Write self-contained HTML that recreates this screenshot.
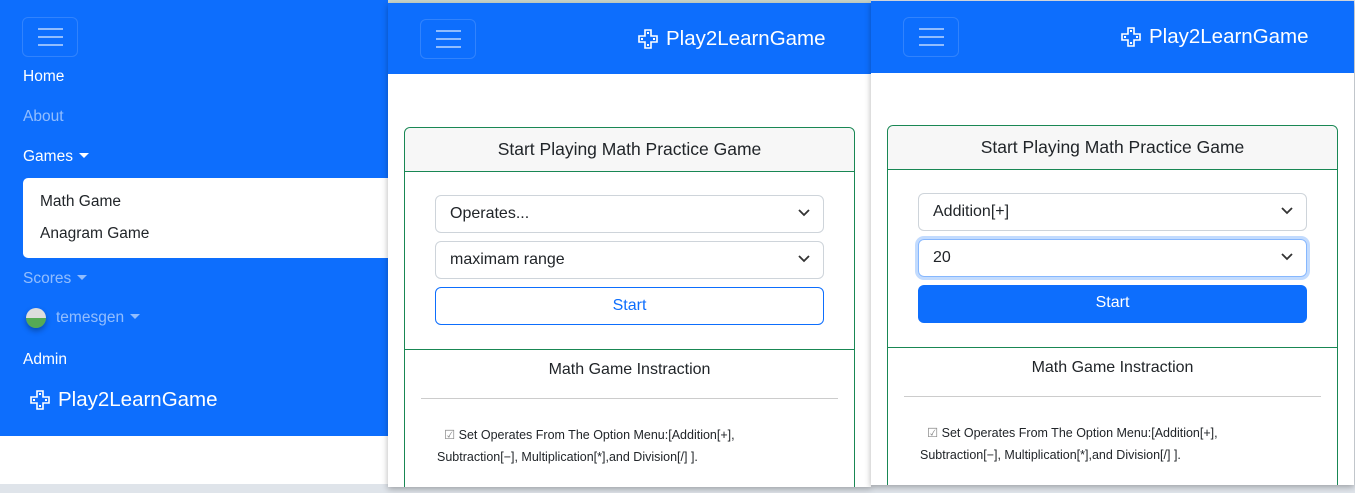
<!DOCTYPE html>
<html><head><meta charset="utf-8">
<style>
*{box-sizing:border-box;margin:0;padding:0}
body{width:1355px;height:493px;background:#dfe4ea;position:relative;overflow:hidden;font-family:"Liberation Sans",sans-serif}
.abs{position:absolute}
.blue{background:#0d6efd}
.tog{position:absolute;width:56px;height:40px;border:1px solid rgba(255,255,255,.15);border-radius:6px}
.tog i{position:absolute;left:15px;width:25px;height:2px;background:rgba(255,255,255,.55)}
.nav{position:absolute;left:23px;font-size:15.5px;color:#fff}
.dim{color:rgba(255,255,255,.55)}
.caret{display:inline-block;width:0;height:0;border-left:5px solid transparent;border-right:5px solid transparent;border-top:5px solid currentColor;vertical-align:3px;margin-left:6px}
.brand{position:absolute;color:#fff;font-size:20.5px;display:flex;align-items:center;gap:8px}
.panel{position:absolute;background:#fff;box-shadow:0 2px 6px rgba(0,0,0,.3);overflow:hidden}
.card{position:absolute;left:16px;width:451px;height:380px;border:1px solid #198754;border-radius:6px}
.ch{height:44px;background:#f7f7f7;border-bottom:1px solid #198754;text-align:center;font-size:17.5px;color:#212529;line-height:42px;border-radius:6px 6px 0 0}
.sel{position:absolute;left:30px;width:389px;height:38px;border:1px solid #ced4da;border-radius:6px;font-size:16px;color:#212529;padding-left:14px;line-height:36px}
.sel svg{position:absolute;right:13px;top:13px}
.btn{position:absolute;left:30px;width:389px;height:38px;border-radius:6px;font-size:16px;text-align:center;line-height:36px}
.sep{position:absolute;left:0;right:0;border-top:1px solid #198754}
.it{position:absolute;left:0;right:0;text-align:center;font-size:16px;color:#212529}
.hr{position:absolute;left:16px;right:16px;border-top:1px solid #ccc}
.txt{position:absolute;left:32px;width:420px;font-size:12.5px;color:#212529;line-height:22px}
</style></head><body>

<!-- panel 1 -->
<div class="abs" style="left:0;top:0;width:388px;height:484px;background:#fff"></div>
<div class="abs blue" style="left:0;top:0;width:388px;height:436px"></div>
<div class="tog" style="left:22px;top:17px"><i style="top:10px"></i><i style="top:18px"></i><i style="top:26px"></i></div>
<div class="nav" style="top:68px">Home</div>
<div class="nav dim" style="top:108px">About</div>
<div class="nav" style="top:148px">Games<span class="caret"></span></div>
<div class="abs" style="left:23px;top:178px;width:370px;height:80px;background:#fff;border-radius:5px"></div>
<div class="abs" style="left:40px;top:193px;font-size:15.5px;color:#212529">Math Game</div>
<div class="abs" style="left:40px;top:225px;font-size:15.5px;color:#212529">Anagram Game</div>
<div class="nav dim" style="top:270px">Scores<span class="caret"></span></div>
<div class="abs" style="left:26px;top:308px;width:20px;height:20px;border-radius:50%;background:linear-gradient(#ddd 50%,#5a5 50%);box-shadow:0 3px 6px rgba(0,0,0,.3)"></div>
<div class="nav dim" style="left:56px;top:309px">temesgen<span class="caret"></span></div>
<div class="nav" style="top:351px">Admin</div>
<div class="brand" style="left:30px;top:388px">
<svg width="20" height="20" viewBox="0 0 20 20" fill="none" stroke="#fff" stroke-width="1.6"><path d="M7 1h6v6h6v6h-6v6H7v-6H1V7h6z"/><rect x="9" y="3" width="2" height="2" fill="#fff" stroke="none"/><rect x="9" y="15" width="2" height="2" fill="#fff" stroke="none"/><rect x="3" y="9" width="2" height="2" fill="#fff" stroke="none"/><rect x="15" y="9" width="2" height="2" fill="#fff" stroke="none"/></svg>Play2LearnGame</div>

<!-- panel 2 -->
<div class="abs" style="left:388px;top:0;width:483px;height:3px;background:#c9d6cb"></div>
<div class="panel" style="left:388px;top:3px;width:483px;height:484px">
 <div class="abs blue" style="left:0;top:0;width:483px;height:71px"></div>
 <div class="tog" style="left:32px;top:16px"><i style="top:10px"></i><i style="top:18px"></i><i style="top:26px"></i></div>
 <div class="brand" style="left:250px;top:24px"><svg width="20" height="20" viewBox="0 0 20 20" fill="none" stroke="#fff" stroke-width="1.6"><path d="M7 1h6v6h6v6h-6v6H7v-6H1V7h6z"/><rect x="9" y="3" width="2" height="2" fill="#fff" stroke="none"/><rect x="9" y="15" width="2" height="2" fill="#fff" stroke="none"/><rect x="3" y="9" width="2" height="2" fill="#fff" stroke="none"/><rect x="15" y="9" width="2" height="2" fill="#fff" stroke="none"/></svg>Play2LearnGame</div>
 <div class="card" style="top:124px">
  <div class="ch">Start Playing Math Practice Game</div>
  <div class="sel" style="top:67px">Operates...<svg width="12" height="8" viewBox="0 0 12 8"><path d="M1 1l5 5 5-5" stroke="#333" stroke-width="1.8" fill="none"/></svg></div>
  <div class="sel" style="top:113px">maximam range<svg width="12" height="8" viewBox="0 0 12 8"><path d="M1 1l5 5 5-5" stroke="#333" stroke-width="1.8" fill="none"/></svg></div>
  <div class="btn" style="top:159px;border:1px solid #0d6efd;color:#0d6efd">Start</div>
  <div class="sep" style="top:221px"></div>
  <div class="it" style="top:233px">Math Game Instraction</div>
  <div class="hr" style="top:270px"></div>
  <div class="txt" style="top:296px">&nbsp;&nbsp;<span style="color:#888">☑</span> Set Operates From The Option Menu:[Addition[+],<br>Subtraction[−], Multiplication[*],and Division[/] ].</div>
 </div>
</div>

<!-- panel 3 -->
<div class="panel" style="left:871px;top:1px;width:483px;height:484px">
 <div class="abs blue" style="left:0;top:0;width:483px;height:72px"></div>
 <div class="tog" style="left:32px;top:16px"><i style="top:10px"></i><i style="top:18px"></i><i style="top:26px"></i></div>
 <div class="brand" style="left:250px;top:24px"><svg width="20" height="20" viewBox="0 0 20 20" fill="none" stroke="#fff" stroke-width="1.6"><path d="M7 1h6v6h6v6h-6v6H7v-6H1V7h6z"/><rect x="9" y="3" width="2" height="2" fill="#fff" stroke="none"/><rect x="9" y="15" width="2" height="2" fill="#fff" stroke="none"/><rect x="3" y="9" width="2" height="2" fill="#fff" stroke="none"/><rect x="15" y="9" width="2" height="2" fill="#fff" stroke="none"/></svg>Play2LearnGame</div>
 <div class="card" style="top:124px">
  <div class="ch">Start Playing Math Practice Game</div>
  <div class="sel" style="top:67px">Addition[+]<svg width="12" height="8" viewBox="0 0 12 8"><path d="M1 1l5 5 5-5" stroke="#333" stroke-width="1.8" fill="none"/></svg></div>
  <div class="sel" style="top:113px;border-color:#86b7fe;box-shadow:0 0 0 3px rgba(13,110,253,.25)">20<svg width="12" height="8" viewBox="0 0 12 8"><path d="M1 1l5 5 5-5" stroke="#333" stroke-width="1.8" fill="none"/></svg></div>
  <div class="btn" style="top:159px;background:#0d6efd;color:#fff">Start</div>
  <div class="sep" style="top:221px"></div>
  <div class="it" style="top:233px">Math Game Instraction</div>
  <div class="hr" style="top:270px"></div>
  <div class="txt" style="top:296px">&nbsp;&nbsp;<span style="color:#888">☑</span> Set Operates From The Option Menu:[Addition[+],<br>Subtraction[−], Multiplication[*],and Division[/] ].</div>
 </div>
</div>
</body></html>
